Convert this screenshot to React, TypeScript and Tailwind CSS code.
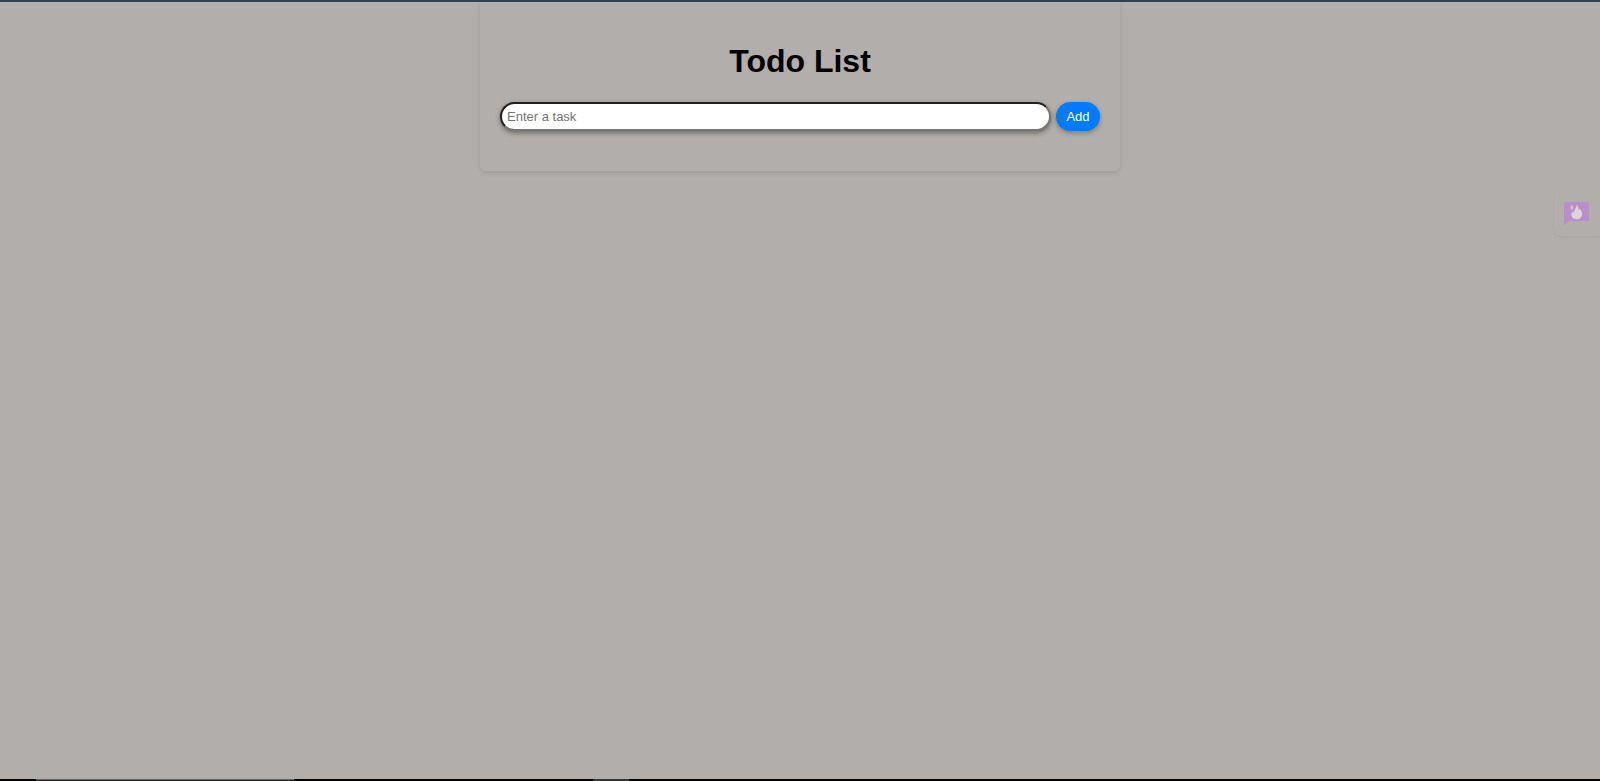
import { useState, type FormEvent } from "react";

function FeedbackIcon() {
  return (
    <svg width="25" height="23" viewBox="0 0 25 23" aria-hidden="true">
      <path d="M1.5 0H23.5Q25 0 25 1.5V17.5Q25 19 23.5 19H4.5L0.8 22.7Q0 23.2 0 22.2V1.5Q0 0 1.5 0Z" fill="#ba8dcb" />
      <path
        d="M12.8 2.4C14 3.8 14.6 5.6 14.4 8C15.2 7.8 15.6 7.4 15.8 6.8C17.3 8.4 18.2 10.4 18 12.4C17.7 15.3 15.6 17.3 12.7 17.3C9.7 17.3 7.4 15.2 7.3 12.6C7.3 11.2 7.8 10.2 8.8 9.4C9.2 10 9.6 10.3 10.1 10.4C10.1 9 10.5 8 11.2 6.8C12.2 5.4 12.9 4.2 12.8 2.4Z"
        fill="#dcd6d8"
      />
      <path d="M7.6 3C8.8 3.7 9.4 4.8 9.3 6C9.2 6.9 8.7 7.4 7.9 7.8C6.9 7.3 6.4 6.5 6.5 5.5C6.6 4.5 7.3 4 7.6 3Z" fill="#d3c4d8" />
    </svg>
  );
}

export default function App() {
  const [task, setTask] = useState("");
  const [tasks, setTasks] = useState<string[]>([]);

  function addTask(event: FormEvent) {
    event.preventDefault();
    if (task.trim() === "") return;
    setTasks([...tasks, task.trim()]);
    setTask("");
  }

  return (
    <div className="flex min-h-screen flex-col border-t-2 border-[#33424f] bg-[#b2aeab] font-['Liberation_Sans',Arial,sans-serif] text-black">
      <main className="grow">
        <section className="mx-auto w-2/5 rounded-b-[5px] p-5 pb-10 shadow-[0_2px_5px_rgba(0,0,0,0.1)]">
          <h1 className="mt-5 mb-[22px] text-center text-[32px] leading-[38px] font-bold">Todo List</h1>
          <form onSubmit={addTask} className="flex gap-[5px]">
            <input
              type="text"
              aria-label="Enter a task"
              placeholder="Enter a task"
              value={task}
              onChange={(event) => setTask(event.target.value)}
              className="h-[29px] min-w-0 grow rounded-full border-2 border-t-[#211f20] border-r-[#767676] border-b-[#767676] border-l-[#211f20] bg-white px-[5px] text-[13px] shadow-[0_2px_5px_rgba(0,0,0,0.4)] placeholder:text-[#757575]"
            />
            <button
              type="submit"
              className="h-[29px] w-11 cursor-pointer rounded-full bg-[#007bff] text-[13px] text-white shadow-[0_2px_5px_rgba(0,0,0,0.3)]"
            >
              Add
            </button>
          </form>
          {tasks.length > 0 && (
            <ul className="mt-5">
              {tasks.map((item, index) => (
                <li key={index} className="py-1">
                  {item}
                </li>
              ))}
            </ul>
          )}
        </section>
      </main>
      <button
        type="button"
        aria-label="Feedback"
        className="fixed top-[190px] right-0 flex h-[46px] w-[46px] items-center rounded-l-lg bg-[#b2aeab] pl-[10px] shadow-[0_1px_3px_rgba(0,0,0,0.06)]"
      >
        <FeedbackIcon />
      </button>
      <footer className="flex h-[2px] bg-black">
        <div className="ml-9 w-[258px] border-t border-[#646262] bg-[#2e292b]" />
        <div className="ml-[299px] w-9 bg-[#353434]" />
      </footer>
    </div>
  );
}
